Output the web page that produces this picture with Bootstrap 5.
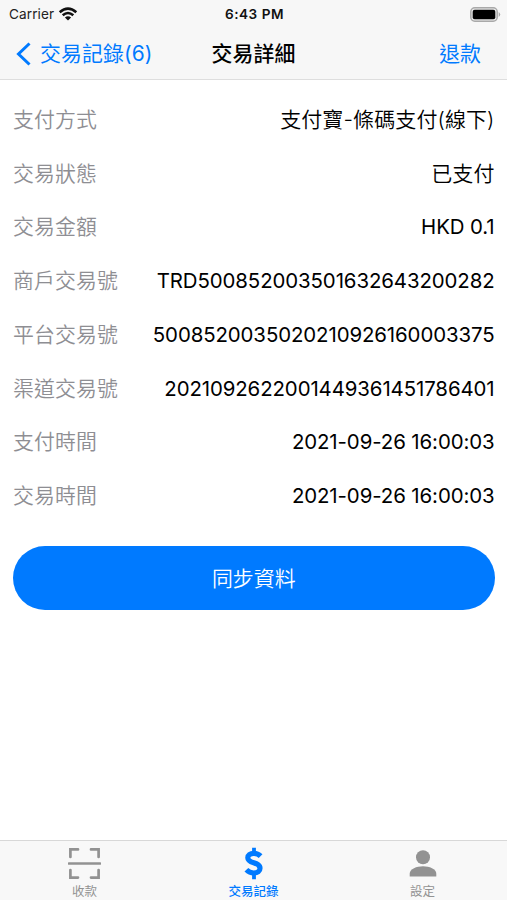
<!DOCTYPE html>
<html lang="zh-Hant">
<head>
<meta charset="utf-8">
<meta name="viewport" content="width=device-width, initial-scale=1">
<title>交易詳細</title>
<link href="https://cdn.jsdelivr.net/npm/bootstrap@5.3.0/dist/css/bootstrap.min.css" rel="stylesheet">
<style>
body { font-family: Inter, "Noto Sans CJK TC", sans-serif; font-size: 20.9px; line-height: 30px; color: #000; background: #fff; }
svg { display: block; flex: none; }
.screen { height: 900px; overflow: hidden; }
.top-area { height: 80px; background: #f7f7f7; border-bottom: 1.5px solid #dedede; }
.status-row { height: 28px; font-size: 13.6px; line-height: 28px; color: #222; }
.carrier { margin-left: 1px; letter-spacing: .1px; }
.side { flex: 1 1 0; min-width: 0; }
.clock { font-weight: 600; color: #111; letter-spacing: .5px; }
.battery { padding-right: 6px; }
.title-row { height: 52px; padding: 0 26px 0 16px; }
.title-row .side:first-child { flex-basis: 10px; }
.blue, .blue:hover { color: #007aff; text-decoration: none; }
.back-text { margin-left: 8px; letter-spacing: .1px; }
.heading { font-size: 20.9px; line-height: 30px; font-weight: 500; letter-spacing: .1px; }
.entries { padding: 13px 12.5px 0 13px; }
.entry { height: 53.75px; }
.entry-name { color: #8e8e93; font-weight: 350; letter-spacing: .1px; }
.entry-value { font-weight: 350; font-size: 21px; letter-spacing: .1px; }
.digits { font-size: 20.4px; letter-spacing: -.09px; }
.sync { height: 64px; margin: 23px 12.5px 0 13px; padding-top: 8px; background: #007aff; color: #fff; font-size: 20.9px; font-weight: 350; }
.sync:hover { background: #0070eb; color: #fff; }
.tabs { height: 60px; background: #f8f8f8; border-top: 1px solid #d8d8d8; }
.tab { flex: 1 1 0; padding-top: 6px; text-decoration: none; font-size: 12.5px; line-height: 18px; font-weight: 400; }
.tab, .tab:hover { color: #929292; }
.tab.current, .tab.current:hover { color: #007aff; font-weight: 500; }
.tab span { margin-top: 3px; }
</style>
</head>
<body>
<div class="screen d-flex flex-column">
  <header class="top-area flex-shrink-0">
    <div class="status-row d-flex align-items-center">
      <div class="side d-flex align-items-center ps-2"><span class="carrier">Carrier</span>
        <svg class="ms-1" width="20" height="14" viewBox="0 0 20 14" fill="none" stroke="#111" stroke-width="2.6"><path d="M1.7 5.2Q10-2 18.3 5.2M4.7 8.3Q10 3.7 15.3 8.3"/><path d="M6.9 10.5Q10 7.9 13.1 10.5L10 13.6Z" fill="#111" stroke="none"/></svg>
      </div>
      <div class="clock">6:43 PM</div>
      <div class="side battery d-flex justify-content-end">
        <svg width="31" height="15" viewBox="0 0 31 15"><rect x=".8" y=".8" width="26.4" height="13.4" rx="4" fill="#e8e8e8" stroke="#a9a9a9" stroke-width="1.5"/><rect x="2.7" y="2.7" width="22.6" height="9.6" rx="2" fill="#000"/><path d="M28.7 5q3 2.5 0 5Z" fill="#a9a9a9"/></svg>
      </div>
    </div>
    <nav class="title-row d-flex align-items-center">
      <div class="side"><a class="blue d-flex align-items-center text-nowrap" href="#"><svg width="16" height="24" viewBox="0 0 16 24" fill="none" stroke="currentColor" stroke-width="3"><path d="M13.5 1.5 2.5 12l11 10.5"/></svg><span class="back-text">交易記錄(6)</span></a></div>
      <h1 class="heading m-0">交易詳細</h1>
      <div class="side text-end"><a class="blue" href="#">退款</a></div>
    </nav>
  </header>
  <main class="flex-grow-1">
    <div class="entries">
      <div class="entry d-flex justify-content-between align-items-center"><span class="entry-name">支付方式</span><span class="entry-value">支付寶-條碼支付(線下)</span></div>
      <div class="entry d-flex justify-content-between align-items-center"><span class="entry-name">交易狀態</span><span class="entry-value">已支付</span></div>
      <div class="entry d-flex justify-content-between align-items-center"><span class="entry-name">交易金額</span><span class="digits">HKD 0.1</span></div>
      <div class="entry d-flex justify-content-between align-items-center"><span class="entry-name">商戶交易號</span><span class="digits">TRD500852003501632643200282</span></div>
      <div class="entry d-flex justify-content-between align-items-center"><span class="entry-name">平台交易號</span><span class="digits">5008520035020210926160003375</span></div>
      <div class="entry d-flex justify-content-between align-items-center"><span class="entry-name">渠道交易號</span><span class="digits">2021092622001449361451786401</span></div>
      <div class="entry d-flex justify-content-between align-items-center"><span class="entry-name">支付時間</span><span class="digits">2021-09-26 16:00:03</span></div>
      <div class="entry d-flex justify-content-between align-items-center"><span class="entry-name">交易時間</span><span class="digits">2021-09-26 16:00:03</span></div>
    </div>
    <div class="d-flex"><button class="btn rounded-pill sync flex-grow-1" type="button">同步資料</button></div>
  </main>
  <nav class="tabs d-flex flex-shrink-0">
    <a class="tab d-flex flex-column align-items-center" href="#"><svg width="33" height="33" viewBox="0 0 33 33" fill="none" stroke="currentColor" stroke-width="2.7"><path d="M2.4 10V2.4H10M23 2.4h7.6V10M30.6 23v7.6H23M10 30.6H2.4V23M1 16.5h31" stroke-linecap="round"/></svg><span>收款</span></a>
    <a class="tab current d-flex flex-column align-items-center" href="#"><svg width="20" height="33" viewBox="0 0 20 33" fill="none" stroke="currentColor" stroke-width="5.2"><path d="M16.6 9.2Q13.8 6.4 9.8 6.4C6 6.4 3.8 8.2 3.8 10.7 3.8 17.2 16 14.3 16 21.3c0 3-2.4 4.7-6.2 4.7Q5.4 26 2.4 22.8"/><path d="M10 .8v5M10 26v6.2" stroke-width="3.8"/></svg><span>交易記錄</span></a>
    <a class="tab d-flex flex-column align-items-center" href="#"><svg width="28" height="33" viewBox="0 0 28 33" fill="currentColor"><circle cx="14" cy="10.2" r="7"/><path d="M.7 29.5v-2.8c0-4.8 7-7.5 13.3-7.5s13.3 2.7 13.3 7.5v2.8Z"/></svg><span>設定</span></a>
  </nav>
</div>
<script src="https://cdn.jsdelivr.net/npm/bootstrap@5.3.0/dist/js/bootstrap.bundle.min.js"></script>
</body>
</html>
